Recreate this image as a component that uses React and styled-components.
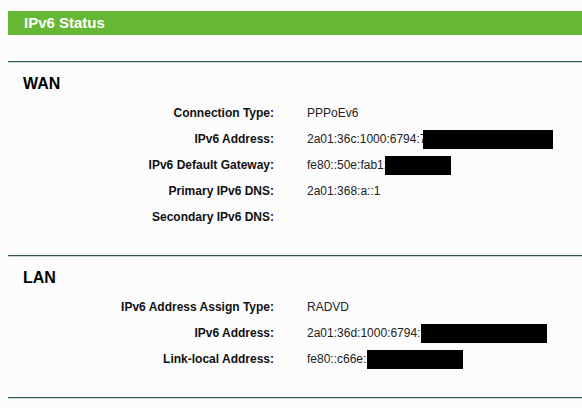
import styled, { createGlobalStyle } from "styled-components";

const GlobalStyle = createGlobalStyle`
  html, body {
    margin: 0;
    padding: 0;
    background: #fcfcfc;
  }
  body {
    font-family: "Liberation Sans", Arial, sans-serif;
  }
`;

const wan = [
  { label: "Connection Type:", value: "PPPoEv6" },
  { label: "IPv6 Address:", value: "2a01:36c:1000:6794:7", hidden: 130, shift: -3 },
  { label: "IPv6 Default Gateway:", value: "fe80::50e:fab1:", hidden: 66, shift: -2 },
  { label: "Primary IPv6 DNS:", value: "2a01:368:a::1" },
  { label: "Secondary IPv6 DNS:", value: "" },
];

const lan = [
  { label: "IPv6 Address Assign Type:", value: "RADVD" },
  { label: "IPv6 Address:", value: "2a01:36d:1000:6794:", hidden: 126, shift: 1 },
  { label: "Link-local Address:", value: "fe80::c66e:", hidden: 96, shift: 1 },
];

const Section = ({ title, rows }) => (
  <Block>
    <Heading>{title}</Heading>
    <Table>
      {rows.map((row) => (
        <Row key={row.label}>
          <Label>{row.label}</Label>
          <Value>
            {row.value}
            {row.hidden && <Redacted $width={row.hidden} $shift={row.shift} />}
          </Value>
        </Row>
      ))}
    </Table>
  </Block>
);

const App = () => {
  return (
    <Page>
      <GlobalStyle />
      <TitleBar>IPv6 Status</TitleBar>
      <Divider />
      <Section title="WAN" rows={wan} />
      <Divider />
      <Section title="LAN" rows={lan} />
      <Divider />
    </Page>
  );
};

export default App;

const Page = styled.div`
  padding: 11px 0 0 8px;
  width: 574px;
`;

const TitleBar = styled.div`
  height: 24px;
  line-height: 24px;
  background: #66b834;
  color: #ffffff;
  font-weight: bold;
  font-size: 15px;
  padding-left: 16px;
  margin-bottom: 26px;
`;

const Divider = styled.div`
  height: 1px;
  background: #2f5747;
  border-bottom: 1px solid #c9ded2;
`;

const Block = styled.div`
  padding: 11px 0 25px 0;
`;

const Heading = styled.div`
  font-size: 16px;
  font-weight: bold;
  line-height: 20px;
  color: #000;
  padding-left: 15px;
  margin-bottom: 6px;
`;

const Table = styled.div`
  display: flex;
  flex-direction: column;
`;

const Row = styled.div`
  display: grid;
  grid-template-columns: 266px 1fr;
  column-gap: 33px;
  height: 26px;
  align-items: center;
  font-size: 12px;
`;

const Label = styled.div`
  text-align: right;
  font-weight: bold;
  color: #111;
`;

const Value = styled.div`
  display: flex;
  align-items: center;
  color: #222;
  white-space: nowrap;
`;

const Redacted = styled.span`
  display: inline-block;
  width: ${(p) => p.$width}px;
  height: 19px;
  background: #000;
  margin-left: ${(p) => p.$shift}px;
`;
